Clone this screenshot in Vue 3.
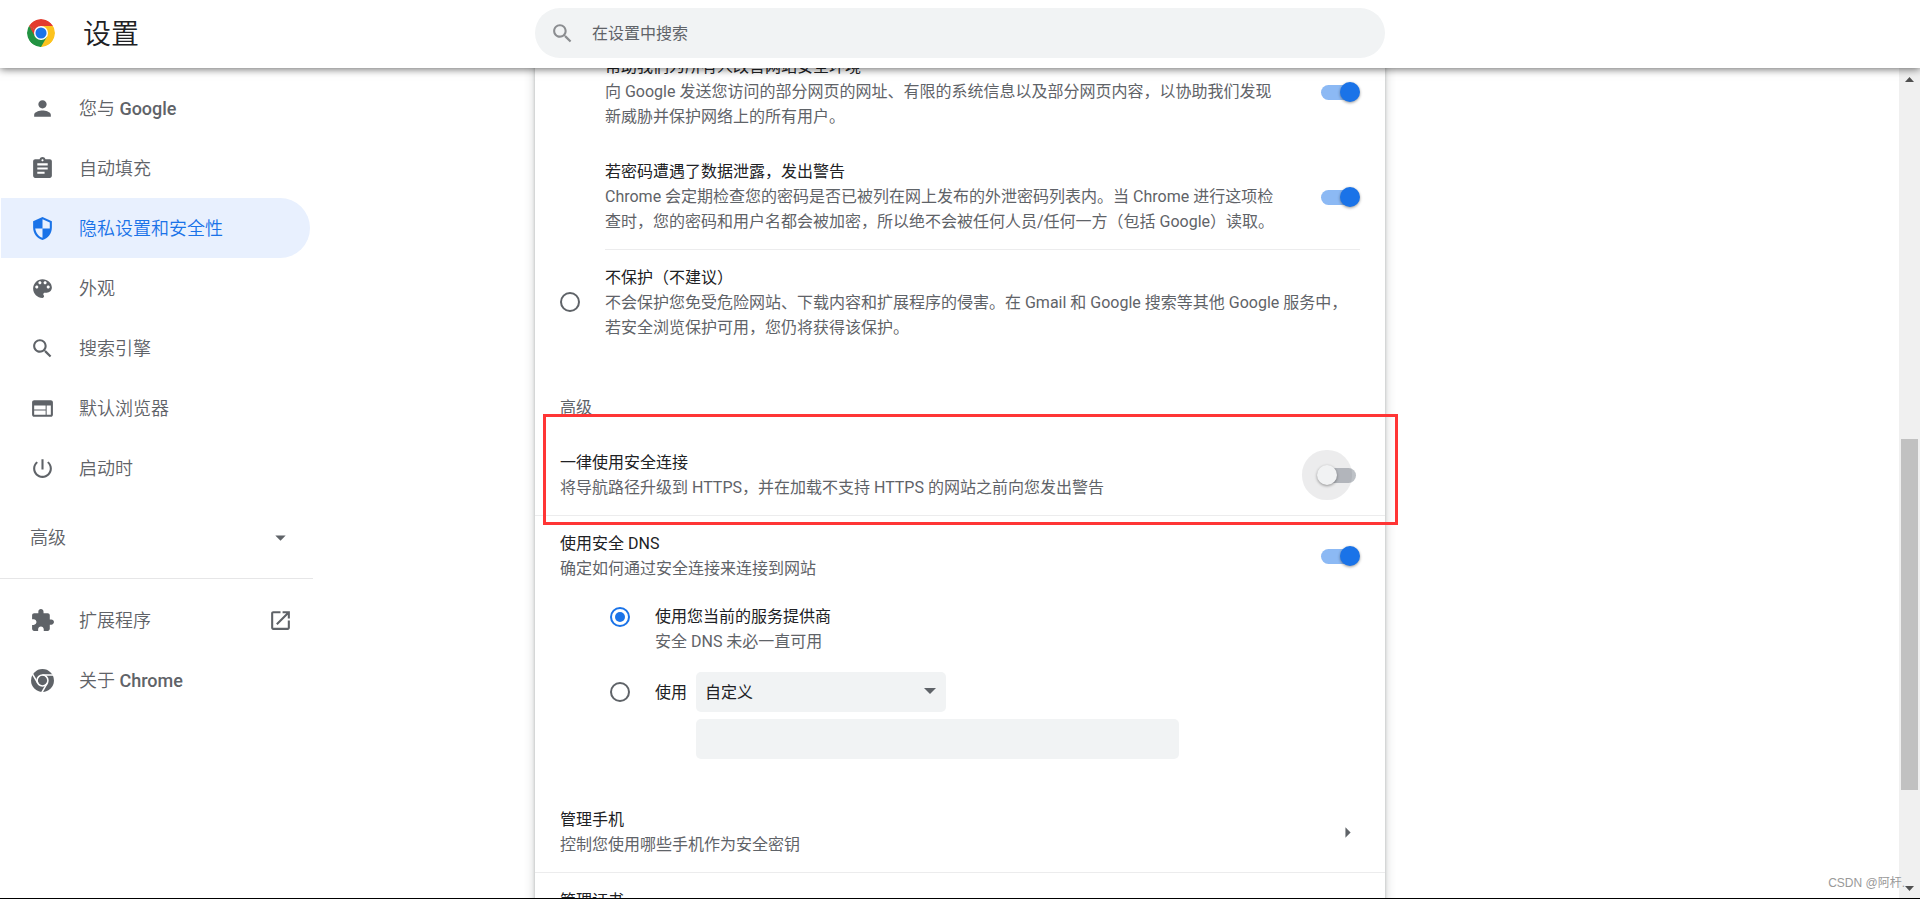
<script setup>
import { ref } from 'vue'

const icons = {
  person: 'M12 12c2.21 0 4-1.79 4-4s-1.79-4-4-4-4 1.79-4 4 1.79 4 4 4zm0 2c-2.67 0-8 1.34-8 4v2h16v-2c0-2.66-5.33-4-8-4z',
  assignment: 'M19 3h-4.18C14.4 1.84 13.3 1 12 1c-1.3 0-2.4.84-2.82 2H5c-1.1 0-2 .9-2 2v14c0 1.1.9 2 2 2h14c1.1 0 2-.9 2-2V5c0-1.1-.9-2-2-2zm-7 0c.55 0 1 .45 1 1s-.45 1-1 1-1-.45-1-1 .45-1 1-1zm2 14H7v-2h7v2zm3-4H7v-2h10v2zm0-4H7V7h10v2z',
  security: 'M12 1L3 5v6c0 5.55 3.84 10.74 9 12 5.16-1.26 9-6.45 9-12V5l-9-4zm0 2.19l7 3.11V12h-7V3.19zM12 12v8.93C8.28 19.78 5.53 16.11 5 12h7z',
  palette: 'M12 3c-4.97 0-9 4.03-9 9s4.03 9 9 9c.83 0 1.5-.67 1.5-1.5 0-.39-.15-.74-.39-1.01-.23-.26-.38-.61-.38-.99 0-.83.67-1.5 1.5-1.5H16c2.76 0 5-2.24 5-5 0-4.42-4.03-8-9-8zm-5.5 9c-.83 0-1.5-.67-1.5-1.5S5.67 9 6.5 9 8 9.67 8 10.5 7.33 12 6.5 12zm3-4C8.67 8 8 7.33 8 6.500S8.670 5 9.500 5s1.500.67 1.500 1.500S10.330 8 9.500 8zm5 0c-.83 0-1.500-.67-1.500-1.500S13.670 5 14.500 5s1.500.67 1.500 1.500S15.330 8 14.500 8zm3 4c-.83 0-1.500-.67-1.500-1.500S16.670 9 17.500 9s1.500.67 1.500 1.500-.67 1.500-1.500 1.500z',
  search: 'M15.5 14h-.79l-.28-.27C15.41 12.59 16 11.11 16 9.5 16 5.91 13.09 3 9.5 3S3 5.91 3 9.5 5.91 16 9.5 16c1.61 0 3.09-.59 4.23-1.57l.27.28v.79l5 4.99L20.49 19l-4.99-5zm-6 0C7.01 14 5 11.99 5 9.5S7.01 5 9.5 5 14 7.01 14 9.5 11.99 14 9.5 14z',
  web: 'M20 4H4c-1.1 0-1.99.9-1.99 2L2 18c0 1.1.9 2 2 2h16c1.1 0 2-.9 2-2V6c0-1.1-.9-2-2-2zm-5 14H4v-4h11v4zm0-5H4V9h11v4zm5 5h-4V9h4v9z',
  power: 'M13 3h-2v10h2V3zm4.83 2.17l-1.42 1.42C17.99 7.86 19 9.81 19 12c0 3.87-3.13 7-7 7s-7-3.13-7-7c0-2.19 1.01-4.14 2.58-5.42L6.17 5.17C4.23 6.82 3 9.26 3 12c0 4.97 4.03 9 9 9s9-4.03 9-9c0-2.74-1.23-5.18-3.17-6.83z',
  extension: 'M20.5 11H19V7c0-1.1-.9-2-2-2h-4V3.5C13 2.12 11.88 1 10.5 1S8 2.12 8 3.5V5H4c-1.1 0-1.99.9-1.99 2v3.8H3.500c1.490 0 2.700 1.210 2.700 2.700s-1.210 2.700-2.700 2.700H2V20c0 1.100.9 2 2 2h3.800v-1.500c0-1.490 1.210-2.700 2.700-2.700 1.490 0 2.700 1.210 2.700 2.700V22H17c1.100 0 2-.9 2-2v-4h1.500c1.380 0 2.500-1.120 2.500-2.500S21.880 11 20.500 11z',
  open: 'M19 19H5V5h7V3H5c-1.110 0-2 .9-2 2v14c0 1.100.89 2 2 2h14c1.100 0 2-.9 2-2v-7h-2v7zM14 3v2h3.590l-9.830 9.830 1.410 1.410L19 6.410V10h2V3h-7z'
}

const menu = [
  { icon: 'person', text: '您与', latin: 'Google' },
  { icon: 'assignment', text: '自动填充' },
  { icon: 'security', text: '隐私设置和安全性', current: true },
  { icon: 'palette', text: '外观' },
  { icon: 'search', text: '搜索引擎' },
  { icon: 'web', text: '默认浏览器' },
  { icon: 'power', text: '启动时' }
]

const reporting = ref(true)
const leakWarning = ref(true)
const httpsOnly = ref(false)
const secureDns = ref(true)
const protection = ref('standard')
const dnsMode = ref('current')
</script>

<template>
  <div class="page">
    <header class="toolbar">
      <div class="brand">
        <svg class="logo" viewBox="0 0 48 48" aria-hidden="true">
          <path fill="#e33b2e" d="M24 24L3.220 12A24 24 0 0 1 44.780 12z" />
          <path fill="#fcc31e" d="M24 24L44.780 12A24 24 0 0 1 24 48z" />
          <path fill="#229342" d="M24 24L24 48A24 24 0 0 1 3.220 12z" />
          <path fill="#e33b2e" d="M24 12H44.780L34 20zM3.220 12L13.610 30 24 24z" />
          <path fill="#fcc31e" d="M44.780 12H24L34.390 30 24 48 38 42z" />
          <path fill="#229342" d="M3.220 12L13.610 30 24 36 34.390 30 24 48 8 40z" />
          <circle cx="24" cy="24" r="12" fill="#fff" />
          <circle cx="24" cy="24" r="9.500" fill="#1a73e8" />
        </svg>
        <h1>设置</h1>
      </div>
      <label class="search">
        <svg class="icon" viewBox="0 0 24 24" aria-hidden="true"><path :d="icons.search" /></svg>
        <input type="text" placeholder="在设置中搜索" aria-label="在设置中搜索" />
      </label>
    </header>

    <div class="body">
      <nav class="sidebar">
        <a v-for="item in menu" :key="item.text" href="#" class="item" :class="{ current: item.current }">
          <svg class="icon" viewBox="0 0 24 24" aria-hidden="true"><path :d="icons[item.icon]" /></svg>
          <span>{{ item.text }} <b v-if="item.latin">{{ item.latin }}</b></span>
        </a>
        <button type="button" class="item advanced">
          <span>高级</span>
          <svg class="icon" viewBox="0 0 24 24" aria-hidden="true"><path d="M7 10l5 5 5-5z" /></svg>
        </button>
        <hr />
        <a href="#" class="item">
          <svg class="icon" viewBox="0 0 24 24" aria-hidden="true"><path :d="icons.extension" /></svg>
          <span class="grow">扩展程序</span>
          <svg class="icon" viewBox="0 0 24 24" aria-hidden="true"><path :d="icons.open" /></svg>
        </a>
        <a href="#" class="item">
          <svg class="icon" viewBox="0 0 24 24" aria-hidden="true">
            <circle cx="12" cy="12" r="11" />
            <g fill="none" stroke="#fff" stroke-width="1.500">
              <circle cx="12" cy="12" r="5.200" />
              <path d="M12 6.800H22.500M7.500 14.600L2.300 5.600M16.500 14.600L11.300 23.600" />
            </g>
          </svg>
          <span>关于 <b>Chrome</b></span>
        </a>
      </nav>

      <main class="card">
        <div class="nested">
          <div class="row">
            <label class="text" for="reporting">
              <span class="title">帮助我们为所有人改善网站安全环境</span>
              <span class="desc">向 Google 发送您访问的部分网页的网址、有限的系统信息以及部分网页内容，以协助我们发现新威胁并保护网络上的所有用户。</span>
            </label>
            <input id="reporting" v-model="reporting" type="checkbox" role="switch" class="toggle" />
          </div>
          <div class="row">
            <label class="text" for="leak">
              <span class="title">若密码遭遇了数据泄露，发出警告</span>
              <span class="desc">Chrome 会定期检查您的密码是否已被列在网上发布的外泄密码列表内。当 Chrome 进行这项检查时，您的密码和用户名都会被加密，所以绝不会被任何人员/任何一方（包括 Google）读取。</span>
            </label>
            <input id="leak" v-model="leakWarning" type="checkbox" role="switch" class="toggle" />
          </div>
        </div>

        <label class="row option">
          <input v-model="protection" type="radio" name="protection" value="none" class="radio" />
          <span class="text ruled">
            <span class="title">不保护（不建议）</span>
            <span class="desc">不会保护您免受危险网站、下载内容和扩展程序的侵害。在 Gmail 和 Google 搜索等其他 Google 服务中，若安全浏览保护可用，您仍将获得该保护。</span>
          </span>
        </label>

        <h2>高级</h2>

        <div class="row line highlighted">
          <label class="text" for="https">
            <span class="title">一律使用安全连接</span>
            <span class="desc">将导航路径升级到 HTTPS，并在加载不支持 HTTPS 的网站之前向您发出警告</span>
          </label>
          <input id="https" v-model="httpsOnly" type="checkbox" role="switch" class="toggle focused" />
          <div class="marker"></div>
        </div>

        <div class="row">
          <label class="text" for="dns">
            <span class="title">使用安全 DNS</span>
            <span class="desc">确定如何通过安全连接来连接到网站</span>
          </label>
          <input id="dns" v-model="secureDns" type="checkbox" role="switch" class="toggle" />
        </div>

        <div class="dns">
          <label class="choice">
            <input v-model="dnsMode" type="radio" name="dns-mode" value="current" class="radio" />
            <span class="title">使用您当前的服务提供商</span>
            <span class="desc">安全 DNS 未必一直可用</span>
          </label>
          <div class="custom">
            <input id="dns-custom" v-model="dnsMode" type="radio" name="dns-mode" value="custom" class="radio" />
            <label for="dns-custom" class="title">使用</label>
            <span class="select">
              <select aria-label="使用">
                <option>自定义</option>
              </select>
              <svg viewBox="0 0 12 6" aria-hidden="true"><path d="M0 0h12L6 6z" /></svg>
            </span>
            <input type="text" class="provider" aria-label="自定义" />
          </div>
        </div>

        <a href="#" class="row line">
          <span class="text">
            <span class="title">管理手机</span>
            <span class="desc">控制您使用哪些手机作为安全密钥</span>
          </span>
          <svg class="icon" viewBox="0 0 24 24" aria-hidden="true"><path d="M10 7v10l5-5z" /></svg>
        </a>
        <a href="#" class="row">
          <span class="text"><span class="title">管理证书</span></span>
        </a>
      </main>

      <div class="scrollbar" aria-hidden="true">
        <svg viewBox="0 0 21 21"><path d="M6 14h9l-4.500-5z" /></svg>
        <div class="before"></div>
        <div class="thumb"></div>
        <div class="after"></div>
        <svg viewBox="0 0 21 21"><path d="M6 9h9l-4.500 5z" /></svg>
      </div>
    </div>

    <div class="watermark">CSDN @阿杆.</div>
  </div>
</template>

<style>
body {
  margin: 0;
  background: #fff;
}
</style>

<style scoped>
* {
  box-sizing: border-box;
}

.page {
  position: relative;
  display: flex;
  flex-direction: column;
  height: 100vh;
  overflow: hidden;
  border-bottom: 1px solid #000;
  color: #202124;
  font-family: Roboto, "Noto Sans CJK SC", sans-serif;
  font-size: 16px;
  line-height: 25px;
}

.toolbar,
.body {
  display: grid;
  grid-template-columns: minmax(313px, 1fr) minmax(0, 850px) minmax(21px, 1fr);
}

.toolbar {
  z-index: 2;
  flex: none;
  align-items: center;
  height: 68px;
  padding-bottom: 2px;
  background: #fff;
  box-shadow: 0 1px 8px rgba(0, 0, 0, 0.6);
}

.brand {
  display: flex;
  align-items: center;
  gap: 28px;
  padding-left: 27px;
}

.logo {
  width: 28px;
  height: 28px;
  border-radius: 50%;
}

h1 {
  margin: 0;
  padding-top: 4px;
  font-size: 28px;
  font-weight: 350;
  line-height: 36px;
}

.icon {
  flex: none;
  width: 25px;
  height: 25px;
  fill: currentColor;
}

.search {
  display: flex;
  align-items: center;
  gap: 17px;
  height: 50px;
  padding: 0 15px;
  border-radius: 25px;
  background: #f1f3f4;
  color: #8b8d90;
}

.search input {
  flex: 1;
  padding: 0;
  border: 0;
  outline: 0;
  background: none;
  font: inherit;
}

.search input::placeholder {
  color: #5f6368;
}

.body {
  flex: 1;
  grid-template-rows: minmax(0, 1fr);
  min-height: 0;
}

.sidebar {
  width: 313px;
  padding-top: 10px;
  color: #5f6368;
  font-size: 18px;
  font-weight: 350;
}

.item {
  display: flex;
  align-items: center;
  gap: 24px;
  width: 309px;
  height: 60px;
  margin-left: 1px;
  padding: 0 17px 0 29px;
  border: 0;
  border-radius: 0 30px 30px 0;
  background: none;
  color: inherit;
  font: inherit;
  text-decoration: none;
}

.item b {
  font-weight: 500;
}

.grow {
  flex: 1;
}

.current {
  background: #e8f0fe;
  color: #1a73e8;
}

.advanced {
  justify-content: space-between;
  margin-top: 9px;
}

hr {
  height: 1px;
  margin: 11px 0;
  border: 0;
  background: #e6e6e7;
}

.card {
  align-self: start;
  margin-top: -29px;
  box-shadow: 0 1px 3px rgba(60, 64, 67, 0.3), 0 3px 8px 3px rgba(60, 64, 67, 0.15);
}

.row {
  display: flex;
  align-items: center;
  padding: 15px 25px;
  color: inherit;
  text-decoration: none;
}

.line {
  border-bottom: 1px solid #ececed;
}

.text {
  flex: 1;
}

.title,
.desc {
  display: block;
}

.desc {
  color: #5f6368;
}

.nested {
  padding-left: 45px;
}

.toggle {
  position: relative;
  flex: none;
  appearance: none;
  width: 43px;
  height: 20px;
  margin: 0 0 0 32px;
}

.toggle::before {
  content: "";
  position: absolute;
  inset: 3px 4px 2px;
  border-radius: 8px;
  background: #bdc1c6;
}

.toggle::after {
  content: "";
  position: absolute;
  top: 0;
  left: 0;
  width: 20px;
  height: 20px;
  border-radius: 50%;
  background: #fff;
  box-shadow: 0 1px 3px rgba(0, 0, 0, 0.4);
}

.toggle:checked::before {
  background: #8cb9f4;
}

.toggle:checked::after {
  right: 0;
  left: auto;
  background: #1a73e8;
}

.focused::after {
  background: #f1f2f3;
  box-shadow: 0 1px 3px rgba(0, 0, 0, 0.4), 0 0 0 15px rgba(95, 99, 110, 0.12);
}

.radio {
  flex: none;
  display: grid;
  place-content: center;
  appearance: none;
  width: 20px;
  height: 20px;
  margin: 0;
  border: 2px solid #5f6368;
  border-radius: 50%;
}

.radio:checked {
  border-color: #1a73e8;
}

.radio:checked::after {
  content: "";
  width: 10px;
  height: 10px;
  border-radius: 50%;
  background: #1a73e8;
}

.option {
  gap: 25px;
  padding-top: 0;
}

.option .radio {
  margin-top: 15px;
}

.ruled {
  padding-top: 15px;
  border-top: 1px solid #ececed;
}

.ruled .desc {
  padding-right: 10px;
}

h2 {
  margin: 0;
  padding: 40px 25px 15px;
  color: #5f6368;
  font-size: 16px;
  font-weight: 400;
  line-height: 25px;
}

.highlighted {
  position: relative;
}

.marker {
  position: absolute;
  inset: -21px -13px -10px 8px;
  border: 3px solid #ff3535;
  pointer-events: none;
}

.dns {
  padding: 8px 25px 33px 75px;
}

.choice {
  display: grid;
  grid-template-columns: 45px 1fr;
  align-items: center;
}

.choice .desc {
  grid-column: 2;
}

.custom {
  display: grid;
  grid-template-columns: 45px auto 1fr;
  align-items: center;
  row-gap: 7px;
  margin-top: 18px;
}

.select {
  position: relative;
  width: 250px;
  margin-left: 9px;
}

select,
.provider {
  width: 100%;
  height: 40px;
  padding: 0 9px;
  border: 0;
  border-radius: 5px;
  background: #f1f3f4;
  color: inherit;
  font: inherit;
}

select {
  display: block;
  appearance: none;
}

.select svg {
  position: absolute;
  top: 16px;
  right: 10px;
  width: 12px;
  height: 6px;
  fill: #5f6368;
  pointer-events: none;
}

.provider {
  grid-column: 3;
  width: 483px;
  max-width: 100%;
  margin-left: 9px;
}

.row > .icon {
  color: #5f6368;
}

.scrollbar {
  justify-self: end;
  display: flex;
  flex-direction: column;
  width: 21px;
  background: #f0f0f0;
}

.scrollbar svg {
  flex: none;
  width: 21px;
  height: 21px;
  fill: #505050;
}

.before {
  flex: 350;
}

.thumb {
  flex: 351;
  margin: 0 2px;
  background: #c1c1c1;
}

.after {
  flex: 87;
}

.watermark {
  position: absolute;
  right: 15px;
  bottom: 2px;
  z-index: 3;
  color: #999;
  font-family: "Liberation Sans", "Noto Sans CJK SC", sans-serif;
  font-size: 12px;
}
</style>
